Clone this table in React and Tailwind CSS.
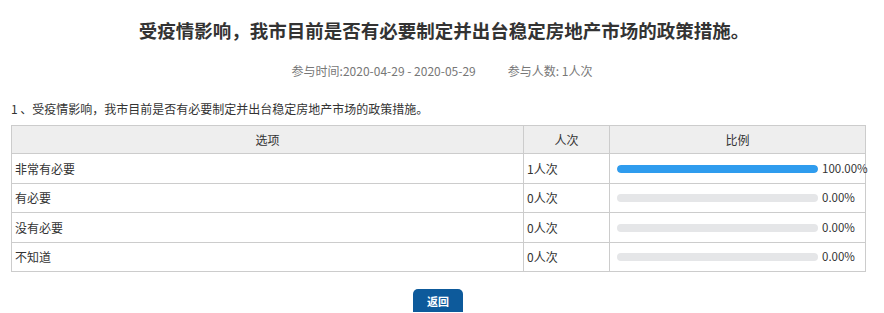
const rows = [
  { label: "非常有必要", count: "1人次", pct: 100, h: "h-[30px]" },
  { label: "有必要", count: "0人次", pct: 0, h: "h-[29px]" },
  { label: "没有必要", count: "0人次", pct: 0, h: "h-[30px]" },
  { label: "不知道", count: "0人次", pct: 0, h: "h-[29px]" },
];

export default function App() {
  return (
    <div
      className="w-[884px] h-[313px] overflow-hidden bg-white text-[#333]"
      style={{ fontFamily: '"Microsoft YaHei", "Noto Sans CJK SC", sans-serif' }}
    >
      {/* Title */}
      <h1 className="pt-[16px] pl-[4px] text-center text-[18.5px] leading-[28px] font-bold text-[#333]">
        受疫情影响，我市目前是否有必要制定并出台稳定房地产市场的政策措施。
      </h1>

      {/* Meta */}
      <div className="mt-[19px] flex justify-center gap-[32px] text-[12px] leading-[16px] text-[#777]">
        <span>参与时间:2020-04-29 - 2020-05-29</span>
        <span>参与人数: 1人次</span>
      </div>

      {/* Question */}
      <div className="mt-[22px] px-[11px] text-[12px] leading-[16px] text-[#333]">
        1 、受疫情影响，我市目前是否有必要制定并出台稳定房地产市场的政策措施。
      </div>

      <table className="mt-[8px] ml-[11px] w-[855px] table-fixed border-collapse text-[12px] text-[#333]">
        <thead>
          <tr className="h-[28px] bg-[#eee]">
            <th className="w-[512px] border border-[#ccc] font-normal">选项</th>
            <th className="w-[86px] border border-[#ccc] font-normal">人次</th>
            <th className="border border-[#ccc] font-normal">比例</th>
          </tr>
        </thead>
        <tbody>
          {rows.map((r) => (
            <tr key={r.label} className={r.h}>
              <td className="border border-[#ccc] pl-[3px]">{r.label}</td>
              <td className="border border-[#ccc] pl-[3px]">{r.count}</td>
              <td className="border border-[#ccc] pl-[7px]">
                <div className="flex items-center whitespace-nowrap">
                  <div className="h-[8px] w-[201px] shrink-0 rounded-full bg-[#e5e6e8] overflow-hidden">
                    <div
                      className="h-full rounded-full bg-[#2f9cee]"
                      style={{ width: `${r.pct}%` }}
                    />
                  </div>
                  <span className="ml-[4px] shrink-0 text-[11.5px]">{r.pct.toFixed(2)}%</span>
                </div>
              </td>
            </tr>
          ))}
        </tbody>
      </table>

      <div className="mt-[17px] flex justify-center">
        <button className="ml-[-8px] h-[23px] w-[50px] rounded-t-[5px] bg-[#0d5a9b] pt-[6px] text-[11px] leading-[12px] font-bold text-white flex justify-center items-start">
          返回
        </button>
      </div>
    </div>
  );
}
